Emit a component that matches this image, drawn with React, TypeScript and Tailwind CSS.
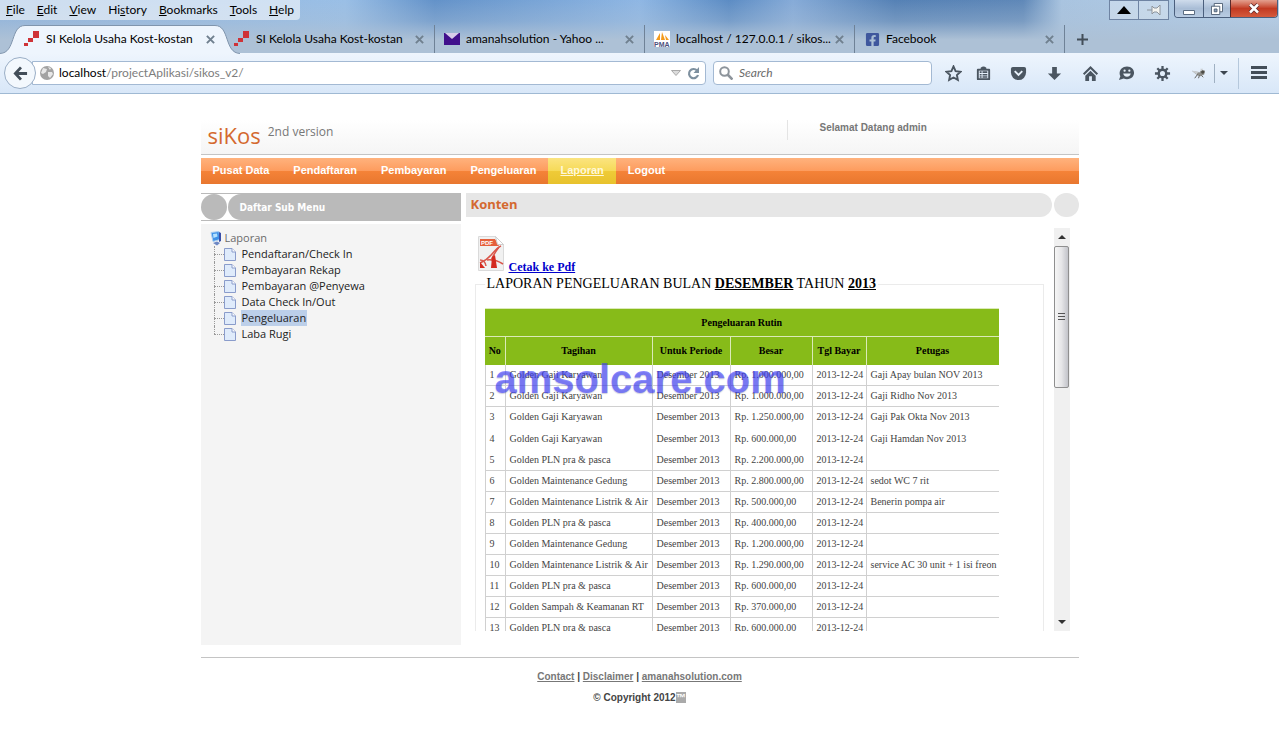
import type { ReactNode } from 'react'
import { FaFacebookSquare } from 'react-icons/fa'

interface Expense {
  bill: string
  amount: string
  note?: string
  rowClass?: string
}

const PERIOD = 'Desember 2013'
const PAID_ON = '2013-12-24'

const expenses: Expense[] = [
  { bill: 'Golden Gaji Karyawan', amount: 'Rp. 1.000.000,00', note: 'Gaji Apay bulan NOV 2013' },
  { bill: 'Golden Gaji Karyawan', amount: 'Rp. 1.000.000,00', note: 'Gaji Ridho Nov 2013' },
  { bill: 'Golden Gaji Karyawan', amount: 'Rp. 1.250.000,00', note: 'Gaji Pak Okta Nov 2013', rowClass: 'h-[21px] border-transparent' },
  { bill: 'Golden Gaji Karyawan', amount: 'Rp. 600.000,00', note: 'Gaji Hamdan Nov 2013', rowClass: 'h-[22px] border-transparent' },
  { bill: 'Golden PLN pra & pasca', amount: 'Rp. 2.200.000,00' },
  { bill: 'Golden Maintenance Gedung', amount: 'Rp. 2.800.000,00', note: 'sedot WC 7 rit' },
  { bill: 'Golden Maintenance Listrik & Air', amount: 'Rp. 500.000,00', note: 'Benerin pompa air' },
  { bill: 'Golden PLN pra & pasca', amount: 'Rp. 400.000,00' },
  { bill: 'Golden Maintenance Gedung', amount: 'Rp. 1.200.000,00' },
  { bill: 'Golden Maintenance Listrik & Air', amount: 'Rp. 1.290.000,00', note: 'service AC 30 unit + 1 isi freon' },
  { bill: 'Golden PLN pra & pasca', amount: 'Rp. 600.000,00' },
  { bill: 'Golden Sampah & Keamanan RT', amount: 'Rp. 370.000,00' },
  { bill: 'Golden PLN pra & pasca', amount: 'Rp. 600.000,00' },
]

const browserMenu = [
  ['', 'F', 'ile'],
  ['', 'E', 'dit'],
  ['', 'V', 'iew'],
  ['Hi', 's', 'tory'],
  ['', 'B', 'ookmarks'],
  ['', 'T', 'ools'],
  ['', 'H', 'elp'],
]

const mainMenu = ['Pusat Data', 'Pendaftaran', 'Pembayaran', 'Pengeluaran', 'Laporan', 'Logout']

const subMenu = [
  'Pendaftaran/Check In',
  'Pembayaran Rekap',
  'Pembayaran @Penyewa',
  'Data Check In/Out',
  'Pengeluaran',
  'Laba Rugi',
]

function KostIcon() {
  return (
    <svg width="16" height="16" viewBox="0 0 16 16" fill="#cf3338">
      <path d="M9 0h6v7H9zM4 7h5v4H4zM0 12h4v3H0z" />
    </svg>
  )
}

function MailIcon() {
  return (
    <svg width="16" height="16" viewBox="0 0 16 16">
      <path d="M0 2h16v12H0z" fill="#41108c" />
      <path d="M1 2h14L8 8z" fill="#d8cdea" />
    </svg>
  )
}

function PmaIcon() {
  return (
    <svg width="16" height="16" viewBox="0 0 16 16">
      <path d="M0 0h16v16H0z" fill="#fff" />
      <path d="M2 9 6 2v7zM7 9l1-8 3 8zM12 9l-1-5 4 5z" fill="#f49b1c" />
      <text x="0" y="16" fontSize="7" fontWeight="bold" fill="#4b4f7c" fontFamily="Liberation Sans">
        PMA
      </text>
    </svg>
  )
}

function CloseIcon() {
  return (
    <svg width="9" height="9" viewBox="0 0 10 10" stroke="#70808f" strokeWidth="2.200">
      <path d="M1 1l8 8M9 1L1 9" />
    </svg>
  )
}

function BrowserTab({ icon, title, active = false }: { icon: ReactNode; title: string; active?: boolean }) {
  return (
    <div
      className={`relative flex h-7 w-[210px] shrink-0 items-center gap-[6px] pr-[10px] pl-[9px] ${
        active ? '' : 'border-r border-[#6f8297]'
      }`}
    >
      {active && (
        <svg className="absolute -left-[15px] top-0" width="240" height="29" viewBox="0 0 240 29">
          <path
            d="M0 28.5C16 28 10 .5 25 .5H215C230 .5 224 28 240 28.5"
            fill="#eef5fd"
            stroke="#8095ad"
          />
        </svg>
      )}
      <span className="relative flex w-4 shrink-0 justify-center">{icon}</span>
      <span className="relative min-w-0 flex-1 whitespace-nowrap">{title}</span>
      <button className="relative" aria-label={`Close ${title}`}>
        <CloseIcon />
      </button>
    </div>
  )
}

function ToolButton({ label, wide = false, children }: { label: string; wide?: boolean; children: ReactNode }) {
  return (
    <button aria-label={label} className={`flex h-6 items-center justify-center ${wide ? 'w-9' : 'w-[30px]'}`}>
      <svg width="17" height="17" viewBox="0 0 18 18" fill="#4b5661">
        {children}
      </svg>
    </button>
  )
}

function TitleBar() {
  return (
    <div className="flex h-[25px] items-start justify-between">
      <nav className="flex h-5 items-center gap-3 rounded-br bg-white/55 pr-[6px] pl-[6px]">
        {browserMenu.map(([before, key, after]) => (
          <button key={before + key + after}>
            {before}
            <span className="underline">{key}</span>
            {after}
          </button>
        ))}
      </nav>
      <div className="flex pr-px">
        <button aria-label="Roll up" className="flex h-5 w-[30px] items-center justify-center border border-[#6f84a3] bg-white/30">
          <svg width="14" height="8" viewBox="0 0 14 8">
            <path d="M7 0l7 8H0z" fill="#000" />
          </svg>
        </button>
        <button aria-label="Pin" className="mr-[5px] flex h-5 w-[30px] items-center justify-center border border-l-0 border-[#6f84a3] bg-white/30">
          <svg width="14" height="14" viewBox="0 0 14 14" fill="#f4f4f0" stroke="#8d949c">
            <path d="M0 7h5M5 3l2 2h3l3-3v10l-3-3H7l-2 2z" />
          </svg>
        </button>
        <div className="flex h-[18px] overflow-hidden rounded-b border border-t-0 border-[#4b5f7d]">
          <button aria-label="Minimize" className="flex w-7 items-center justify-center bg-linear-to-b from-[#cfdcec] via-[#a9bdd6] via-50% to-[#b9cce2]">
            <svg width="12" height="14" viewBox="0 0 12 14">
              <path d="M.5 8.500h11v4H.5z" fill="#fff" stroke="#5a6b80" />
            </svg>
          </button>
          <button aria-label="Restore" className="flex w-[27px] items-center justify-center border-l border-[#4b5f7d] bg-linear-to-b from-[#cfdcec] via-[#a9bdd6] via-50% to-[#b9cce2]">
            <svg width="12" height="12" viewBox="0 0 13 13" fill="#fff" stroke="#4d5d72">
              <path d="M3.500.5h9v9h-9z" />
              <path d="M.5 3.500h9v9h-9z" />
              <path d="M3.500 6.500h3v3h-3z" fill="#8ea3bd" />
            </svg>
          </button>
          <button aria-label="Close window" className="flex w-[47px] items-center justify-center border-l border-[#5b2a2a] bg-linear-to-b from-[#e3a08f] via-[#c23a22] via-50% to-[#d55a3c]">
            <svg width="12" height="11" viewBox="0 0 12 11">
              <path d="M2 1.500l8 8M10 1.500l-8 8" stroke="#5f2b2b" strokeWidth="4" />
              <path d="M2 1.500l8 8M10 1.500l-8 8" stroke="#fff" strokeWidth="2.500" />
            </svg>
          </button>
        </div>
      </div>
    </div>
  )
}

function AddressBar() {
  return (
    <div className="flex h-[41px] items-center border-b border-[#9fb9d3] bg-linear-to-b from-[#eef5fd] to-[#d8e7f8] pl-[4px]">
      <button
        aria-label="Back"
        className="relative z-10 flex size-8 shrink-0 items-center justify-center rounded-full border border-[#9aaec6] bg-[#f3f8fd]"
      >
        <svg width="15" height="15" viewBox="0 0 16 16" fill="none" stroke="#434e59" strokeWidth="3">
          <path d="M15 8H3M8.500 1.500L2.500 8l6 6.500" />
        </svg>
      </button>
      <div className="-ml-1 flex h-6 flex-1 items-center rounded-r-sm border border-[#a3b9d3] bg-white pr-[5px] pl-[7px]">
        <svg width="14" height="14" viewBox="0 0 14 14">
          <circle cx="7" cy="7" r="7" fill="#a3a3a3" />
          <path d="M3 2l4 1-1 3-3 2-2-1zM8 6l4 0 1 2-3 4-2-2zM8 1l3 1-1 2z" fill="#e8e8e8" />
        </svg>
        <label htmlFor="url" className="ml-[5px] text-black">
          localhost
        </label>
        <input id="url" defaultValue="/projectAplikasi/sikos_v2/" className="min-w-0 flex-1 text-[#7d7d7d] outline-none" />
        <svg width="10" height="6" viewBox="0 0 10 6">
          <path d="M.5.5h9L5 5.500z" fill="#dcdcdc" stroke="#a9a9a9" />
        </svg>
        <button aria-label="Reload" className="ml-[6px]">
          <svg width="13" height="13" viewBox="0 0 13 13">
            <path d="M10 3.500A4.600 4.600 0 1 0 11 8" fill="none" stroke="#7e909f" strokeWidth="2.200" />
            <path d="M12 0v6H6.500z" fill="#7e909f" />
          </svg>
        </button>
      </div>
      <div className="ml-[7px] flex h-6 w-[219px] items-center gap-[6px] rounded-sm border border-[#a3b9d3] bg-white pl-[5px]">
        <svg width="14" height="14" viewBox="0 0 14 14" fill="none" stroke="#8d949b" strokeWidth="2">
          <circle cx="5.500" cy="5.500" r="4.300" />
          <path d="M8.500 8.500l5 5" strokeWidth="2.600" />
        </svg>
        <input aria-label="Search" placeholder="Search" className="min-w-0 flex-1 italic outline-none placeholder:text-[#6b6b6b]" />
      </div>
      <div className="ml-[6px] flex items-center">
        <ToolButton label="Bookmark">
          <path d="M9 1.500l2.200 5 5.300.6-3.900 3.500 1 5.200L9 13.200l-4.600 2.600 1-5.200L1.500 7.100l5.300-.6z" fill="none" stroke="#4b5661" strokeWidth="2" />
        </ToolButton>
        <ToolButton label="Bookmarks list">
          <path d="M3 4h3V3q3-3 6 0v1h3q1 0 1 1v10q0 1-1 1H3q-1 0-1-1V5q0-1 1-1z" />
          <path d="M4 6h10v8H4z" fill="#e4eefa" />
          <path d="M5 6.500h2v2H5zM8 6.500h5v2H8zM5 9.500h2v1.500H5zM8 9.500h5v1.500H8zM5 12h2v1.500H5zM8 12h5v1.500H8z" />
        </ToolButton>
        <div className="w-[2px]" />
        <ToolButton label="Pocket" wide>
          <path d="M3 2h12q2 0 2 2v4a8 8 0 0 1-16 0V4q0-2 2-2z" />
          <path d="M5 6.500l4 4 4-4" fill="none" stroke="#e8f1fa" strokeWidth="2" />
        </ToolButton>
        <ToolButton label="Downloads" wide>
          <path d="M6.500 2h5v7H16l-7 7-7-7h4.500z" />
        </ToolButton>
        <ToolButton label="Home" wide>
          <path d="M9 1l8 8-1.500 1.500L9 4.200l-6.500 6.300L1 9z" />
          <path d="M9 6l5.500 5.300V17H10.500v-5h-3v5h-4v-5.700z" />
        </ToolButton>
        <ToolButton label="Chat" wide>
          <path d="M9.500 1.500c10 0 10 13.500 0 13.500q-2 0-3.500-.7L1 16l1.500-4C0 7 3.500 1.500 9.500 1.500z" />
          <path d="M5.500 9h8q-1 3.500-4 3.500T5.500 9z" fill="#e8f1fa" />
          <circle cx="7" cy="6" r="1.200" fill="#e8f1fa" />
          <circle cx="12" cy="6" r="1.200" fill="#e8f1fa" />
        </ToolButton>
        <ToolButton label="Settings" wide>
          <circle cx="9" cy="9" r="4" fill="none" stroke="#4b5661" strokeWidth="2.600" />
          <path d="M9 1v4M9 13v4M1 9h4M13 9h4M3.500 3.500L6 6M12 12l2.500 2.500M14.500 3.500L12 6M6 12l-2.500 2.500" stroke="#4b5661" strokeWidth="2.400" />
        </ToolButton>
        <ToolButton label="Firebug" wide>
          <path d="M2 6l8 2 2-3 4 1-1 4-4 2-3-1z" fill="#8c8c88" />
          <path d="M2 6l7 1-2 3zM11 4l3 0-2 3z" fill="#c9cdd0" />
          <path d="M8 10l-3 4M10 11l-1 3M12 11l2 2" stroke="#5b5b58" />
          <circle cx="13.500" cy="7.500" r="1.800" fill="#4b4b46" />
        </ToolButton>
      </div>
      <button aria-label="Firebug options" className="-ml-[2px] flex h-[19px] w-6 items-center border-l border-[#9fb0c2] pl-[5px]">
        <svg width="8" height="4" viewBox="0 0 8 4">
          <path d="M0 0h8L4 4z" fill="#3d4650" />
        </svg>
      </button>
      <div className="h-[31px] w-px bg-[#b5c8dc]" />
      <button aria-label="Open menu" className="flex w-10 justify-center">
        <svg width="16" height="14" viewBox="0 0 16 14" fill="#434e59">
          <path d="M0 0h16v3H0zM0 5h16v3H0zM0 10h16v3H0z" />
        </svg>
      </button>
    </div>
  )
}

function BrowserChrome() {
  return (
    <header className="font-['Lato',sans-serif] text-[12px] text-black">
      <div className="bg-[linear-gradient(180deg,transparent_0%,rgba(172,192,213,.35)_40%,#adc1d6_75%),linear-gradient(90deg,#8fb3dc_0%,#9abfe6_27%,#6392c9_34%,#8fb7e4_50%,#5c8cc4_57%,#86abd8_62%,#5581b5_70%,#5f88b8_80%,#a9c4e0_83%,#b6cfe8_100%)]">
        <TitleBar />
        <div className="flex h-7 items-center pl-[15px]">
          <BrowserTab active icon={<KostIcon />} title="SI Kelola Usaha Kost-kostan" />
          <BrowserTab icon={<KostIcon />} title="SI Kelola Usaha Kost-kostan" />
          <BrowserTab icon={<MailIcon />} title="amanahsolution - Yahoo ..." />
          <BrowserTab icon={<PmaIcon />} title="localhost / 127.0.0.1 / sikos..." />
          <BrowserTab icon={<FaFacebookSquare size={15} color="#3f579d" />} title="Facebook" />
          <button aria-label="New tab" className="ml-3">
            <svg width="11" height="11" viewBox="0 0 11 11" stroke="#434e59" strokeWidth="2">
              <path d="M5.500 0v11M0 5.500h11" />
            </svg>
          </button>
        </div>
      </div>
      <AddressBar />
    </header>
  )
}

function PageIcon() {
  return (
    <svg width="12" height="13" viewBox="0 0 12 13">
      <path d="M.5.5H8l3.500 3.500v8.500H.5z" fill="#dfebfb" stroke="#8a9ccb" />
      <path d="M8 .5V4h3.500" fill="#fff" stroke="#8a9ccb" />
    </svg>
  )
}

function Sidebar() {
  return (
    <aside className="flex w-[260px] shrink-0 flex-col font-['Open_Sans',sans-serif]">
      <div className="flex h-7 items-center border-y border-[#bababa] bg-white">
        <span className="size-[26px] rounded-full bg-[#bababa]" />
        <h2 className="ml-px flex h-[26px] flex-1 items-center rounded-l-full bg-[#bababa] pl-3 font-['DejaVu_Sans_Condensed','DejaVu_Sans',sans-serif] text-[10px] font-bold text-white">
          Daftar Sub Menu
        </h2>
      </div>
      <div className="mt-[3px] flex-1 bg-[#f4f4f4] pt-[6px] pl-[9px] text-[11px] leading-4">
        <div className="flex items-center gap-[3px] text-[#6b6b6b]">
          <svg width="12" height="15" viewBox="0 0 12 15">
            <path d="M1 1.500L9 .5l1 8-7 2z" fill="#3f92e8" stroke="#a9cdf0" />
            <path d="M3 3l4-.5.5 3L3.500 7z" fill="#b5e2ff" />
            <path d="M9 1l2 1v8l-2 1z" fill="#3a4fa8" />
            <path d="M3 12l4-1.500 3 1.500-3 2.500z" fill="#6d88c4" />
          </svg>
          Laporan
        </div>
        <ul className="ml-[4px]">
          {subMenu.map((item, i) => (
            <li key={item} className="relative flex h-4 items-center">
              <span
                className={`absolute top-0 left-0 border-l border-dotted border-[#999] ${
                  i === subMenu.length - 1 ? 'h-2' : 'h-4'
                }`}
              />
              <span className="w-[10px] border-t border-dotted border-[#999]" />
              <PageIcon />
              <a
                href="#"
                className={`ml-[5px] px-px text-[#222] ${item === 'Pengeluaran' ? 'bg-[#bccfe9]' : ''}`}
              >
                {item}
              </a>
            </li>
          ))}
        </ul>
      </div>
    </aside>
  )
}

function PdfIcon() {
  return (
    <svg width="27" height="35" viewBox="0 0 27 35">
      <path d="M1.500.5h17l8 8v26h-25z" fill="#f1f1f1" stroke="#dadada" />
      <path d="M3 3h15l4 7H3z" fill="#e5603c" />
      <path d="M18.500.5l8 8h-6z" fill="#fff" stroke="#cfcfcf" />
      <text x="4" y="9" fontSize="6" fontWeight="bold" fill="#fff" fontFamily="Liberation Sans">
        PDF
      </text>
      <path d="M3 27q7-3 12-9 6-7 9-8" fill="none" stroke="#d9564a" strokeWidth="1.500" />
      <path d="M3 24q5 0 6 6M22 11q-6 8-8 14M10 24q8-1 16 4" fill="none" stroke="#d9564a" strokeWidth="1.500" />
      <path d="M15 21l3-2 2 13h-6z" fill="#d42a20" />
      <path d="M3 26l5 6H3z" fill="#d42a20" />
    </svg>
  )
}

function ExpenseTable() {
  const head = 'h-7 border-t border-[#dbeab8] text-center font-bold text-black'
  return (
    <table className="w-[514px] table-fixed border-collapse bg-white text-[10px] leading-3 whitespace-nowrap text-[#444]">
      <colgroup>
        <col className="w-5" />
        <col className="w-[147px]" />
        <col className="w-[78px]" />
        <col className="w-[82px]" />
        <col className="w-[54px]" />
        <col />
      </colgroup>
      <thead className="bg-[#87bb19]">
        <tr>
          <th colSpan={6} className={head}>
            Pengeluaran Rutin
          </th>
        </tr>
        <tr>
          {['No', 'Tagihan', 'Untuk Periode', 'Besar', 'Tgl Bayar', 'Petugas'].map((title) => (
            <th key={title} className={`${head} border-r last:border-r-0`}>
              {title}
            </th>
          ))}
        </tr>
      </thead>
      <tbody>
        {expenses.map((row, i) => (
          <tr key={i} className={`border-b ${row.rowClass ?? 'h-[21px] border-[#d0d0d0]'}`}>
            <td className="border-x border-x-[#d0d0d0] pl-1">{i + 1}</td>
            <td className="border-r border-r-[#d0d0d0] pl-1">{row.bill}</td>
            <td className="border-r border-r-[#d0d0d0] pl-1">{PERIOD}</td>
            <td className="border-r border-r-[#d0d0d0] pl-1">{row.amount}</td>
            <td className="border-r border-r-[#d0d0d0] pl-1">{PAID_ON}</td>
            <td className="pl-1">{row.note}</td>
          </tr>
        ))}
      </tbody>
    </table>
  )
}

function Scrollbar() {
  return (
    <div className="flex w-4 flex-col items-center bg-[#f0f0f0]">
      <button aria-label="Scroll up" className="flex h-[18px] items-center">
        <svg width="8" height="4" viewBox="0 0 8 4">
          <path d="M4 0l4 4H0z" fill="#333" />
        </svg>
      </button>
      <div className="flex h-[142px] w-[15px] items-center justify-center rounded-xs border border-[#8f8f8f] bg-linear-to-r from-[#f6f6f6] via-[#e6e6e8] to-[#c2c3c9]">
        <svg width="7" height="8" viewBox="0 0 7 8" fill="#555">
          <path d="M0 0h7v1H0zM0 3h7v1H0zM0 6h7v1H0z" />
        </svg>
      </div>
      <button aria-label="Scroll down" className="mt-auto flex h-[18px] items-center">
        <svg width="8" height="4" viewBox="0 0 8 4">
          <path d="M0 0h8L4 4z" fill="#333" />
        </svg>
      </button>
    </div>
  )
}

function Content() {
  return (
    <main className="min-w-0 flex-1">
      <div className="flex h-6 gap-[2px]">
        <h2 className="flex-1 rounded-r-full bg-[#e6e6e6] pl-[5px] font-['Open_Sans',sans-serif] text-[13px] leading-[22px] font-bold text-[#d4692f]">
          Konten
        </h2>
        <span className="w-[25px] rounded-full bg-[#e6e6e6]" />
      </div>
      <div className="mt-[11px] mr-[9px] flex h-[403px] font-['Liberation_Serif',serif]">
        <div className="relative flex-1 overflow-hidden pt-2 pr-[10px] pl-[9px]">
          <a href="#" className="flex items-end gap-[5px] pl-[2px] text-[12px] leading-[14px] font-bold text-[#0000cc] underline">
            <PdfIcon />
            <span className="-mb-[3px]">Cetak ke Pdf</span>
          </a>
          <fieldset className="mt-[5px] h-[500px] border border-[#ebebeb] px-[9px]">
            <legend className="px-[2px] text-[14px] leading-4 text-black">
              LAPORAN PENGELUARAN BULAN <b className="underline">DESEMBER</b> TAHUN <b className="underline">2013</b>
            </legend>
            <div className="pt-4">
              <ExpenseTable />
            </div>
          </fieldset>
          <div className="pointer-events-none absolute top-[128px] left-[29px] font-['Liberation_Sans',sans-serif] text-[40px] leading-[46px] font-bold text-[#3c3cff]/60 [text-shadow:0_1px_1px_rgba(60,60,120,.25)]">
            amsolcare.com
          </div>
        </div>
        <Scrollbar />
      </div>
    </main>
  )
}

export default function App() {
  return (
    <div className="min-h-screen bg-white font-['Liberation_Sans',sans-serif]">
      <BrowserChrome />
      <div className="mx-auto mt-[26px] max-w-[878px]">
        <div className="flex h-[35px] items-start border-b border-[#c4c4c4] bg-linear-to-b from-white to-[#f5f5f5] pl-[7px] font-['Open_Sans',sans-serif]">
          <h1 className="text-[22px] leading-[30px] text-[#d4692f]">siKos</h1>
          <span className="ml-[7px] pt-[3px] text-[12px] leading-[18px] text-[#777]">2nd version</span>
          <div className="ml-auto h-5 w-[292px] border-l border-[#e4e4e4] pl-8 font-['Liberation_Sans',sans-serif] text-[10px] leading-4 font-bold text-[#777]">
            Selamat Datang admin
          </div>
        </div>
        <nav className="mt-[3px] flex h-[26px] bg-[linear-gradient(180deg,#ffb27d_0%,#fd9c5e_49%,#f58338_50%,#e8772f_100%)] text-[11px] leading-6 font-bold text-white">
          {mainMenu.map((item) => (
            <a
              key={item}
              href="#"
              className={`px-3 ${
                item === 'Laporan'
                  ? 'bg-[linear-gradient(180deg,#fbe480_0%,#f6da58_49%,#efcb38_50%,#e8c22c_100%)] text-[#fff8d8] underline'
                  : ''
              }`}
            >
              {item}
            </a>
          ))}
        </nav>
        <div className="mt-[9px] flex gap-[5px]">
          <Sidebar />
          <div className="flex min-w-0 flex-1 pb-[14px]">
            <Content />
          </div>
        </div>
        <footer className="mt-3 border-t border-[#c4c4c4] pt-2 text-center text-[10px] leading-[21px] font-bold text-[#444]">
          <p>
            <a href="#" className="text-[#777] underline">Contact</a> |{' '}
            <a href="#" className="text-[#777] underline">Disclaimer</a> |{' '}
            <a href="#" className="text-[#777] underline">amanahsolution.com</a>
          </p>
          <p>
            © Copyright 2012<span className="bg-[#aaa] text-white">™</span>
          </p>
        </footer>
      </div>
    </div>
  )
}
